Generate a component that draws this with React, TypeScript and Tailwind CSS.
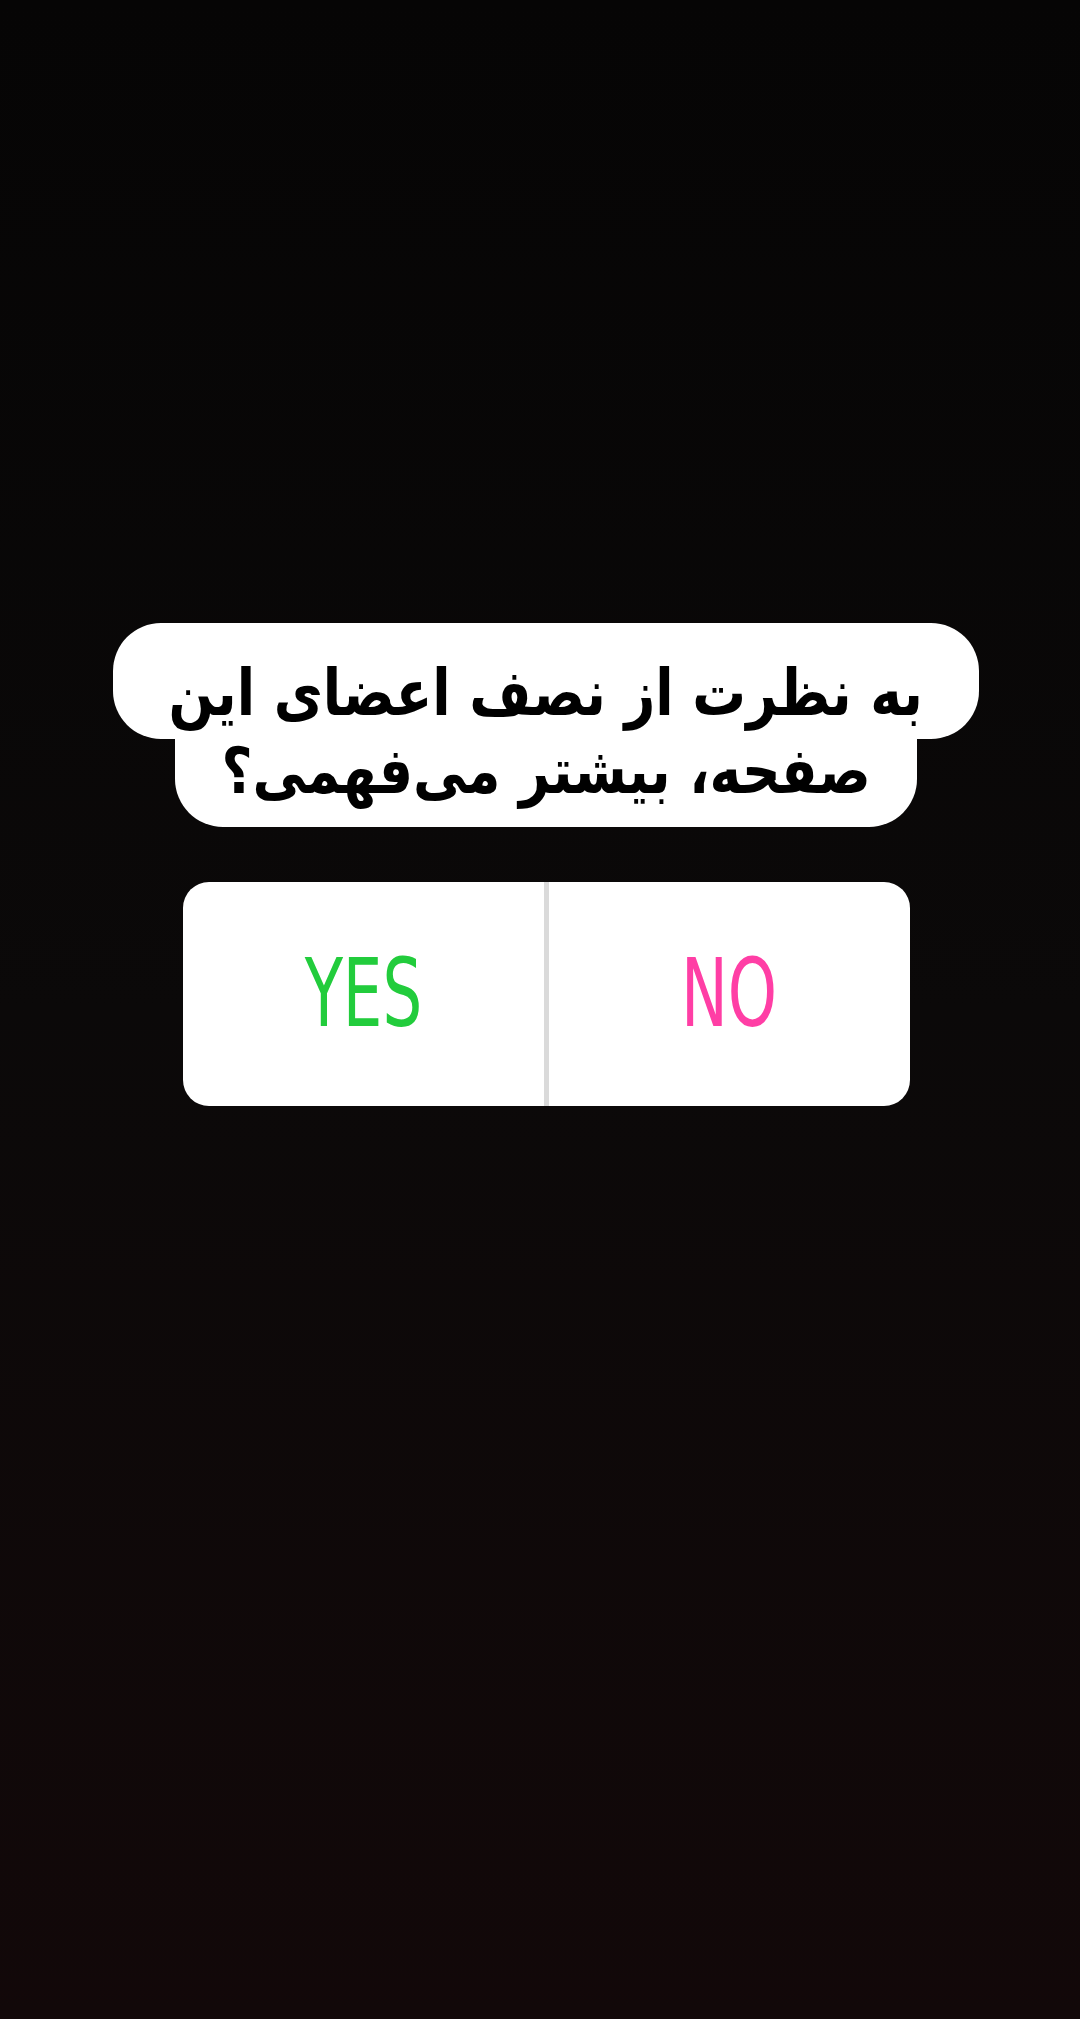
export default function App() {
  return (
    <div className="w-[1080px] h-[2019px] bg-gradient-to-b from-[#060505] via-[#0b0909] to-[#120809] flex flex-col items-center pt-[623px] pl-[12px]">
      {/* Question */}
      <div dir="rtl" className="flex flex-col items-center" style={{ fontFamily: '"DejaVu Sans Condensed", "DejaVu Sans", sans-serif' }}>
        <div className="bg-white rounded-[48px] w-[866px] h-[116px] flex items-end justify-center pb-[14px]">
          <span className="text-black font-bold text-[64px] leading-none scale-x-[0.93]">به نظرت از نصف اعضای این</span>
        </div>
        <div className="bg-white rounded-b-[48px] w-[742px] h-[88px] flex items-start justify-center">
          <span className="text-black font-bold text-[64px] leading-none scale-x-[0.93]">صفحه، بیشتر می‌فهمی؟</span>
        </div>
      </div>

      {/* Poll */}
      <div className="mt-[55px] w-[727px] h-[224px] bg-white rounded-[26px] flex overflow-hidden">
        <div className="flex-1 flex items-center justify-center">
          <span className="text-[#22cc3c] text-[94px] leading-none scale-x-[0.74]" style={{ fontFamily: '"DejaVu Sans Condensed", sans-serif' }}>YES</span>
        </div>
        <div className="w-[5px] bg-[#dadada]" />
        <div className="flex-1 flex items-center justify-center">
          <span className="text-[#ff3ea5] text-[94px] leading-none scale-x-[0.74]" style={{ fontFamily: '"DejaVu Sans Condensed", sans-serif' }}>NO</span>
        </div>
      </div>
    </div>
  )
}
